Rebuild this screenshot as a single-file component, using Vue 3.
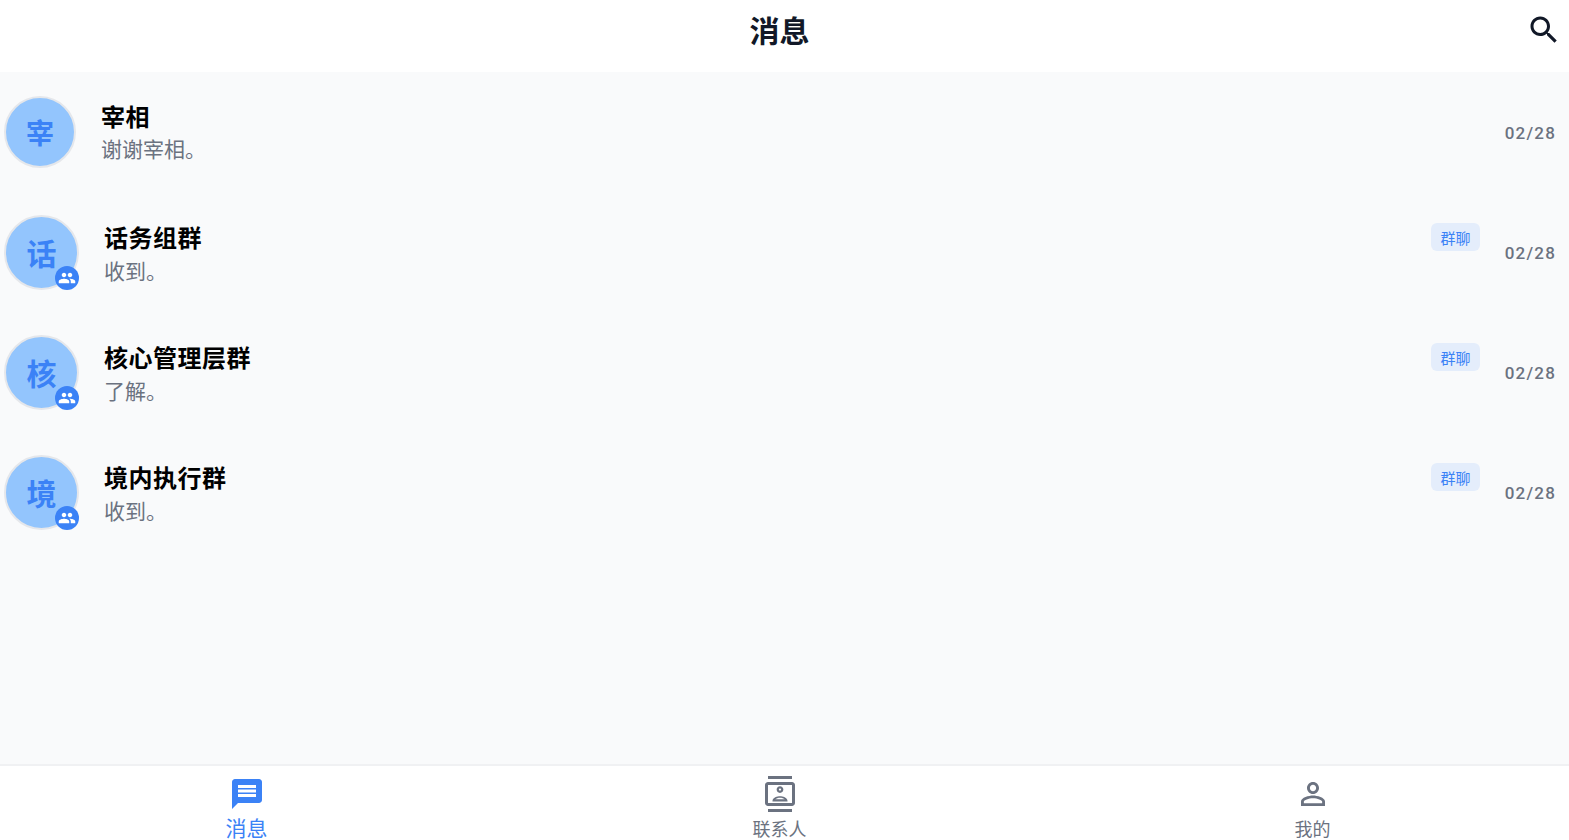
<script setup>
import { ref } from 'vue'

const chats = ref([
  { id: 1, name: '宰相', last: '谢谢宰相。', time: '02/28', group: false },
  { id: 2, name: '话务组群', last: '收到。', time: '02/28', group: true },
  { id: 3, name: '核心管理层群', last: '了解。', time: '02/28', group: true },
  { id: 4, name: '境内执行群', last: '收到。', time: '02/28', group: true }
])
</script>

<template>
  <div class="page">
    <header class="top">
      <h1>消息</h1>
      <svg class="search" viewBox="0 0 24 24" width="36" height="36">
        <path d="M15.5 14h-.79l-.28-.27C15.41 12.59 16 11.11 16 9.5 16 5.91 13.09 3 9.5 3S3 5.91 3 9.5 5.91 16 9.5 16c1.61 0 3.09-.59 4.23-1.57l.27.28v.79l5 4.99L20.49 19l-4.99-5zm-6 0C7.01 14 5 11.99 5 9.5S7.01 5 9.5 5 14 7.01 14 9.5 11.99 14 9.5 14z" />
      </svg>
    </header>

    <main class="list">
      <div v-for="c in chats" :key="c.id" class="row" :class="{ 'is-group': c.group }">
        <div class="avatar">
          {{ c.name[0] }}
          <span v-if="c.group" class="group-dot">
            <svg viewBox="0 0 24 24" width="18" height="18">
              <path d="M16 11c1.66 0 2.99-1.34 2.99-3S17.66 5 16 5s-3 1.34-3 3 1.34 3 3 3zm-8 0c1.66 0 2.99-1.34 2.99-3S9.66 5 8 5 5 6.34 5 8s1.34 3 3 3zm0 2c-2.33 0-7 1.17-7 3.5V19h14v-2.5c0-2.33-4.67-3.5-7-3.5zm8 0c-.29 0-.62.02-.97.05 1.16.84 1.97 1.97 1.97 3.45V19h6v-2.5c0-2.33-4.67-3.5-7-3.5z" />
            </svg>
          </span>
        </div>
        <div class="body">
          <div class="name">{{ c.name }}</div>
          <div class="last">{{ c.last }}</div>
        </div>
        <span v-if="c.group" class="tag">群聊</span>
        <span class="time">{{ c.time }}</span>
      </div>
    </main>

    <nav class="tabs">
      <div class="tab active">
        <svg viewBox="0 0 24 24" width="36" height="36">
          <path d="M20 2H4c-1.1 0-1.99.9-1.99 2L2 22l4-4h14c1.1 0 2-.9 2-2V4c0-1.1-.9-2-2-2zm-2 12H6v-2h12v2zm0-3H6V9h12v2zm0-3H6V6h12v2z" />
        </svg>
        <span>消息</span>
      </div>
      <div class="tab">
        <svg viewBox="0 0 24 24" width="36" height="36">
          <path d="M20 0H4v2h16V0zM4 24h16v-2H4v2zM20 4H4c-1.1 0-2 .9-2 2v12c0 1.1.9 2 2 2h16c1.1 0 2-.9 2-2V6c0-1.100-.9-2-2-2zm0 14H4V6h16v12zm-8-6.750c1.240 0 2.250-1.010 2.250-2.250S13.240 6.750 12 6.750 9.750 7.760 9.750 9s1.010 2.250 2.250 2.250zm0-3c.41 0 .75.34.75.75s-.34.75-.75.75-.75-.34-.75-.75.34-.75.75-.75zM17 16.490c0-2.090-3.310-2.990-5-2.990s-5 .9-5 2.990V17h10v-.51zm-8.190-1c.61-.52 2.030-.99 3.190-.99 1.170 0 2.590.47 3.200.99H8.810z" />
        </svg>
        <span>联系人</span>
      </div>
      <div class="tab">
        <svg viewBox="0 0 24 24" width="36" height="36">
          <path d="M12 5.900c1.160 0 2.100.94 2.100 2.100s-.94 2.100-2.100 2.100S9.900 9.160 9.900 8s.94-2.100 2.100-2.100m0 9c2.970 0 6.100 1.460 6.100 2.100v1.100H5.900V17c0-.64 3.130-2.100 6.100-2.100M12 4C9.790 4 8 5.790 8 8s1.790 4 4 4 4-1.790 4-4-1.790-4-4-4zm0 9c-2.670 0-8 1.340-8 4v3h16v-3c0-2.660-5.330-4-8-4z" />
        </svg>
        <span>我的</span>
      </div>
    </nav>
  </div>
</template>

<style>
html, body { margin: 0; padding: 0; }
</style>

<style scoped>
.page {
  position: relative;
  width: 100%;
  height: 840px;
  display: flex;
  flex-direction: column;
  overflow: hidden;
  background: #f9fafb;
  font-family: Inter, "Noto Sans CJK SC", sans-serif;
}
.top {
  position: relative;
  flex: none;
  height: 72px;
  box-sizing: border-box;
  padding-right: 10px;
  background: #fff;
  display: flex;
  align-items: center;
  justify-content: center;
}
.top h1 {
  margin: 0;
  font-size: 30px;
  font-weight: 700;
  color: #111827;
  line-height: 62px;
  padding-bottom: 10px;
}
.search {
  position: absolute;
  right: 7px;
  top: 12px;
  fill: #111827;
}
.list { flex: 1; }
.row {
  height: 120px;
  display: flex;
  align-items: center;
  padding: 0 13px 0 4px;
  box-sizing: border-box;
  position: relative;
}
.avatar {
  position: relative;
  flex: none;
  width: 72px;
  height: 72px;
  box-sizing: border-box;
  border-radius: 50%;
  border: 2px solid #e5e7eb;
  background: #93c5fd;
  color: #3b82f6;
  font-size: 28px;
  font-weight: 700;
  display: flex;
  align-items: center;
  justify-content: center;
}
.is-group .avatar {
  width: 75px;
  height: 75px;
  font-size: 30px;
}
.group-dot {
  position: absolute;
  right: -2px;
  bottom: -2px;
  width: 24px;
  height: 24px;
  border-radius: 50%;
  background: #3b82f6;
  display: flex;
  align-items: center;
  justify-content: center;
}
.group-dot svg { fill: #fff; }
.body {
  flex: 1;
  margin-left: 25px;
  padding-top: 4px;
  min-width: 0;
}
.is-group .body { padding-top: 7px; }
.name {
  font-size: 24px;
  font-weight: 700;
  color: #000;
  line-height: 32px;
  letter-spacing: 0.5px;
}
.last {
  font-size: 21px;
  color: #6b7280;
  line-height: 32px;
}
.is-group .last { line-height: 33px; }
.tag {
  position: absolute;
  left: 1431px;
  top: 31px;
  width: 49px;
  height: 28px;
  border-radius: 6px;
  background: #e4edfb;
  color: #3b82f6;
  font-size: 15px;
  display: flex;
  align-items: center;
  justify-content: center;
}
.time {
  font-family: Roboto, Inter, sans-serif;
  font-size: 17px;
  font-weight: 500;
  letter-spacing: 1.2px;
  color: #6b7280;
  padding-top: 2px;
}
.tabs {
  flex: none;
  height: 76px;
  box-sizing: border-box;
  background: #fff;
  border-top: 2px solid #f0f1f3;
  display: grid;
  grid-template-columns: repeat(3, 533px);
  justify-content: center;
  width: 1559px;
}
.tabs::after {
  content: '';
  position: absolute;
  left: 1559px;
  right: 0;
  bottom: 0;
  height: 76px;
  box-sizing: border-box;
  background: #fff;
  border-top: 2px solid #f0f1f3;
}
.tab {
  display: flex;
  flex-direction: column;
  align-items: center;
  padding-top: 10px;
  color: #6b7280;
  font-size: 18px;
  line-height: 26px;
}
.tab svg { fill: #6b7280; flex: none; }
.tab span { margin-top: 5px; }
.tab.active { color: #3b82f6; font-size: 21px; }
.tab.active span { margin-top: 4px; }
.tab.active svg { fill: #3b82f6; }
</style>
